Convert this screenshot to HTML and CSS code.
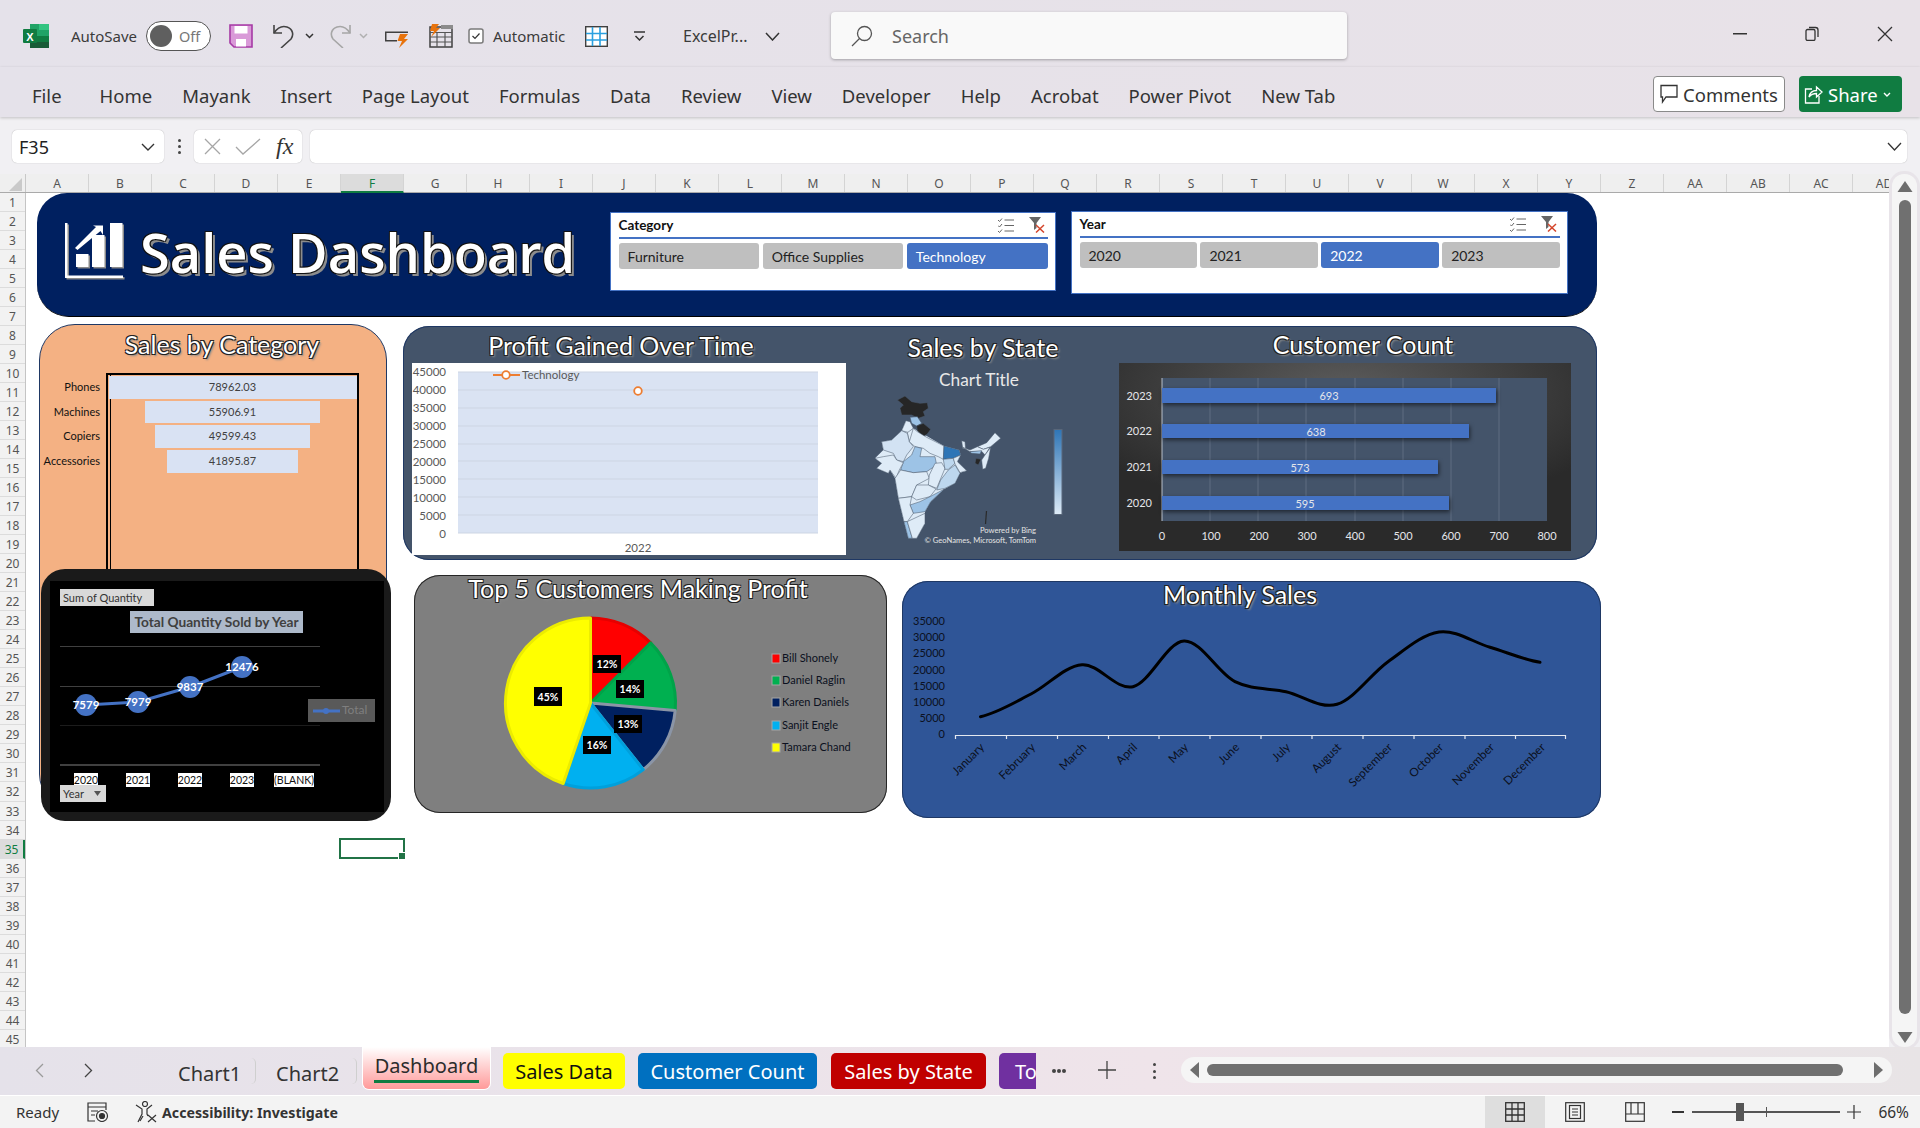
FILE: index.html
```html
<!DOCTYPE html>
<html lang="en">
<head>
  <meta charset="UTF-8" />
  <title>ExcelProject - Excel</title>
  <link rel="stylesheet" href="styles.css">
</head>
<body>
<div class="app">

  <!-- title bar -->
  <header class="titlebar">
    <svg class="ic-excel" width="26" height="24" viewBox="0 0 26 24">
      <rect x="7" y="0" width="19" height="6" fill="#21a366"/>
      <rect x="16" y="0" width="10" height="6" fill="#33c481"/>
      <rect x="7" y="6" width="9" height="6" fill="#21a366"/>
      <rect x="16" y="6" width="10" height="6" fill="#21a366"/>
      <rect x="7" y="12" width="9" height="6" fill="#107c41"/>
      <rect x="16" y="12" width="10" height="6" fill="#107c41"/>
      <rect x="7" y="18" width="19" height="6" fill="#185c37"/>
      <rect x="0" y="5" width="14" height="14" rx="1" fill="#107c41"/>
      <text x="7" y="16.5" text-anchor="middle" class="xl-x">X</text>
    </svg>
    <span class="tb-text autosave">AutoSave</span>
    <span class="toggle"><i class="knob"></i><span class="off">Off</span></span>
    <svg class="ic-save" width="24" height="24" viewBox="0 0 24 24">
      <path d="M1 1H23V23H5L1 19Z" fill="#d99ad8" stroke="#a63aa5" stroke-width="1.6"/>
      <rect x="5.5" y="2" width="13" height="7.5" fill="#fff"/>
      <rect x="7" y="15" width="10" height="7.5" fill="#fff"/>
    </svg>
    <svg class="ic-undo" width="24" height="24" viewBox="0 0 24 24" fill="none" stroke="#444" stroke-width="1.6">
      <path d="M2 1V9H10"/><path d="M2 9C6 3 10 1.500 15 3C21 5 22 11 19 15L9 24"/>
    </svg>
    <svg class="ic-chev c1" width="9" height="6" viewBox="0 0 9 6" fill="none" stroke="#333" stroke-width="1.500"><path d="M1 1L4.500 4.500L8 1"/></svg>
    <svg class="ic-redo" width="24" height="24" viewBox="0 0 24 24" fill="none" stroke="#a6a6a6" stroke-width="1.6">
      <path d="M22 1V9H14"/><path d="M22 9C18 3 14 1.500 9 3C3 5 2 11 5 15L15 24"/>
    </svg>
    <svg class="ic-chev c2" width="9" height="6" viewBox="0 0 9 6" fill="none" stroke="#b0b0b0" stroke-width="1.500"><path d="M1 1L4.500 4.500L8 1"/></svg>
    <svg class="ic-refresh" width="25" height="19" viewBox="0 0 25 19">
      <path d="M1 2.500H24V4H2.500V11H13V12.500H1Z" fill="#404040"/>
      <path d="M16 5H24L20 10H24L15 19L18 12H13.500Z" fill="#e8730c"/>
    </svg>
    <svg class="ic-calc" width="24" height="24" viewBox="0 0 24 24">
      <rect x="1" y="3" width="22" height="20" fill="none" stroke="#404040" stroke-width="1.500"/>
      <path d="M1 8.500H23M1 13H23M1 18H23M8 8V23M16 8V23" stroke="#555" stroke-width="1.200"/>
      <rect x="12" y="1" width="12" height="4" fill="#8c8c8c"/>
      <path d="M3 0H10L7 4H11L2 13L5 7H1Z" fill="#e8730c"/>
    </svg>
    <span class="auto-check"><svg width="16" height="16" viewBox="0 0 16 16" fill="none"><rect x="1" y="1" width="14" height="14" rx="2" fill="#fff" stroke="#7a7a7a" stroke-width="1.500"/><path d="M4.500 8L7 10.500L11.500 5.500" stroke="#333" stroke-width="1.200"/></svg></span>
    <span class="tb-text automatic">Automatic</span>
    <svg class="ic-grid" width="23" height="21" viewBox="0 0 23 21">
      <rect x="0.700" y="0.700" width="21.600" height="19.600" fill="#fff" stroke="#404040" stroke-width="1.400"/>
      <path d="M7.500 1V20M15 1V20M1 7.500H22M1 14H22" stroke="#2aa0e0" stroke-width="1.600"/>
    </svg>
    <svg class="ic-more" width="13" height="10" viewBox="0 0 13 10" fill="none" stroke="#333" stroke-width="1.500"><path d="M1 1H12"/><path d="M2.500 5L6.500 9L10.500 5"/></svg>
    <span class="tb-text filename">ExcelPr...</span>
    <svg class="ic-chev c3" width="15" height="9" viewBox="0 0 15 9" fill="none" stroke="#333" stroke-width="1.500"><path d="M1 1L7.500 8L14 1"/></svg>
    <div class="searchbox">
      <svg width="22" height="22" viewBox="0 0 22 22" fill="none" stroke="#555" stroke-width="1.300"><circle cx="13.500" cy="8.500" r="7"/><path d="M8.500 13.500L1 21"/></svg>
      <span>Search</span>
    </div>
    <div class="win-btns">
      <svg width="14" height="2" viewBox="0 0 14 2"><rect width="14" height="1.500" fill="#333"/></svg>
      <svg width="14" height="15" viewBox="0 0 14 15" fill="none" stroke="#333" stroke-width="1.300"><rect x="1" y="3.500" width="9" height="11" rx="1.500"/><path d="M4 1.500H10.500C12 1.500 13 2.500 13 4V11"/></svg>
      <svg width="16" height="16" viewBox="0 0 16 16" stroke="#333" stroke-width="1.300"><path d="M1 1L15 15M15 1L1 15"/></svg>
    </div>
  </header>

  <!-- ribbon tabs -->
  <nav class="ribbon">
    <a class="file-tab">File</a><a>Home</a><a>Mayank</a><a>Insert</a><a>Page Layout</a><a>Formulas</a><a>Data</a><a>Review</a><a>View</a><a>Developer</a><a>Help</a><a>Acrobat</a><a>Power Pivot</a><a>New Tab</a>
    <div class="ribbon-right">
      <button class="btn-comments">
        <svg width="18" height="20" viewBox="0 0 18 20" fill="none" stroke="#333" stroke-width="1.300"><path d="M1 1.500H17V13H6L2.500 18V13H1Z"/></svg>
        Comments
      </button>
      <button class="btn-share">
        <svg width="19" height="20" viewBox="0 0 19 20" fill="none" stroke="#fff" stroke-width="1.300"><path d="M8 5H1.500V19H15V12"/><path d="M5 13C6 8 9 6.500 12.500 6.500V3L18 8L12.500 13V9.500C9.500 9.500 7 10.500 5 13Z"/></svg>
        Share
        <svg width="8" height="5" viewBox="0 0 8 5" fill="none" stroke="#fff" stroke-width="1.400"><path d="M1 1L4 4L7 1"/></svg>
      </button>
    </div>
  </nav>

  <!-- formula bar -->
  <div class="formula-bar">
    <div class="namebox">
      <span>F35</span>
      <svg width="14" height="8" viewBox="0 0 14 8" fill="none" stroke="#333" stroke-width="1.400"><path d="M1 1L7 7L13 1"/></svg>
    </div>
    <div class="fb-dots"><i></i><i></i><i></i></div>
    <div class="fb-actions">
      <svg width="17" height="17" viewBox="0 0 17 17" stroke="#a6a6a6" stroke-width="1.300"><path d="M1 1L16 16M16 1L1 16"/></svg>
      <svg width="26" height="17" viewBox="0 0 26 17" fill="none" stroke="#a6a6a6" stroke-width="1.300"><path d="M1 9L8 16L25 1"/></svg>
      <span class="fx">fx</span>
    </div>
    <div class="fb-input">
      <svg width="15" height="9" viewBox="0 0 15 9" fill="none" stroke="#333" stroke-width="1.300"><path d="M1 1L7.500 8L14 1"/></svg>
    </div>
  </div>

  <div class="grid-area">
    <div class="sheet-col">
      <div class="col-heads">
        <span class="corner"><svg width="13" height="13" viewBox="0 0 13 13"><path d="M13 0V13H0Z" fill="#c9c9c9"/></svg></span>
        <span>A</span><span>B</span><span>C</span><span>D</span><span>E</span><span class="on">F</span><span>G</span><span>H</span><span>I</span><span>J</span><span>K</span><span>L</span><span>M</span><span>N</span><span>O</span><span>P</span><span>Q</span><span>R</span><span>S</span><span>T</span><span>U</span><span>V</span><span>W</span><span>X</span><span>Y</span><span>Z</span><span>AA</span><span>AB</span><span>AC</span><span>AD</span>
      </div>
      <div class="sheet-row">
        <div class="row-heads">
          <span>1</span><span>2</span><span>3</span><span>4</span><span>5</span><span>6</span><span>7</span><span>8</span><span>9</span><span>10</span><span>11</span><span>12</span><span>13</span><span>14</span><span>15</span><span>16</span><span>17</span><span>18</span><span>19</span><span>20</span><span>21</span><span>22</span><span>23</span><span>24</span><span>25</span><span>26</span><span>27</span><span>28</span><span>29</span><span>30</span><span>31</span><span>32</span><span>33</span><span>34</span><span class="on">35</span><span>36</span><span>37</span><span>38</span><span>39</span><span>40</span><span>41</span><span>42</span><span>43</span><span>44</span><span>45</span>
        </div>

        <!-- floating objects on the worksheet -->
        <main class="sheet">
          <div class="banner">
            <svg class="logo" width="60" height="57" viewBox="0 0 60 57">
              <g fill="#8a8a8a" transform="translate(1.500 1.500)">
                <path d="M0 0H2.500V52.500H58V55H0Z"/><rect x="11" y="31" width="12.500" height="13"/><rect x="27" y="12" width="12.500" height="32"/><rect x="45" y="0" width="12.500" height="44"/>
              </g>
              <g fill="#fff">
                <path d="M0 0H2.500V52.500H58V55H0Z"/><rect x="11" y="31" width="12.500" height="13"/><rect x="27" y="12" width="12.500" height="32"/><rect x="45" y="0" width="12.500" height="44"/>
                <path d="M10 25L31 4L28 2.500H38V12L35.500 8L12.500 27Z"/>
              </g>
            </svg>
            <h1>Sales Dashboard</h1>
          </div>

          <section class="slicer slicer-cat">
            <div class="slicer-head">
              <b>Category</b>
              <svg class="ic-multi" width="16" height="15" viewBox="0 0 16 15" fill="none" stroke="#666" stroke-width="1"><path d="M6.500 2H16M6.500 7.500H16M6.500 13H16M0 2L1.500 3.500L4 .5M0 7.500L1.500 9L4 6M0 13L1.500 14.500L4 11.500"/></svg>
              <svg class="ic-clear" width="16" height="16" viewBox="0 0 16 16"><path d="M0 0H12L7.500 6V11L5 13V6Z" fill="#666"/><path d="M7 8L15 15.500M15 8L7 15.500" stroke="#d4462c" stroke-width="1.500"/></svg>
            </div>
            <div class="slicer-btns">
              <span>Furniture</span><span>Office Supplies</span><span class="sel">Technology</span>
            </div>
          </section>

          <section class="slicer slicer-year">
            <div class="slicer-head">
              <b>Year</b>
              <svg class="ic-multi" width="16" height="15" viewBox="0 0 16 15" fill="none" stroke="#666" stroke-width="1"><path d="M6.500 2H16M6.500 7.500H16M6.500 13H16M0 2L1.500 3.500L4 .5M0 7.500L1.500 9L4 6M0 13L1.500 14.500L4 11.500"/></svg>
              <svg class="ic-clear" width="16" height="16" viewBox="0 0 16 16"><path d="M0 0H12L7.500 6V11L5 13V6Z" fill="#666"/><path d="M7 8L15 15.500M15 8L7 15.500" stroke="#d4462c" stroke-width="1.500"/></svg>
            </div>
            <div class="slicer-btns">
              <span>2020</span><span>2021</span><span class="sel">2022</span><span>2023</span>
            </div>
          </section>

          <section class="card-category">
            <h2 class="wtitle">Sales by Category</h2>
            <div class="funnel">
              <div class="funnel-labels">
                <span>Phones</span><span>Machines</span><span>Copiers</span><span>Accessories</span>
              </div>
              <div class="funnel-frame">
                <div class="funnel-bar" style="width:248px">78962.03</div>
                <div class="funnel-bar" style="width:175px">55906.91</div>
                <div class="funnel-bar" style="width:155px">49599.43</div>
                <div class="funnel-bar" style="width:131px">41895.87</div>
              </div>
            </div>
          </section>

          <section class="card-slate">
            <svg class="fill" viewBox="403 326 1194 234">
              <!-- profit chart -->
              <rect x="412" y="363" width="434" height="192" fill="#fff"/>
              <rect x="458" y="372" width="360" height="161" fill="#dae3f3"/>
              <path d="M458 372H818M458 390H818M458 408H818M458 426H818M458 444H818M458 461H818M458 479H818M458 497H818M458 515H818M458 533H818" stroke="#cdd5e3" stroke-width="1"/>
              <g class="t-axis" text-anchor="end">
                <text x="446" y="376">45000</text><text x="446" y="394">40000</text><text x="446" y="412">35000</text><text x="446" y="430">30000</text><text x="446" y="448">25000</text><text x="446" y="466">20000</text><text x="446" y="484">15000</text><text x="446" y="502">10000</text><text x="446" y="520">5000</text><text x="446" y="538">0</text>
              </g>
              <text x="638" y="552" text-anchor="middle" class="t-axis">2022</text>
              <path d="M493 375H520" stroke="#ed7d31" stroke-width="2"/>
              <circle cx="506" cy="375" r="3.800" fill="#fff" stroke="#ed7d31" stroke-width="1.800"/>
              <text x="522" y="379" class="t-axis">Technology</text>
              <circle cx="638" cy="391" r="3.800" fill="#fff" stroke="#ed7d31" stroke-width="1.800"/>

              <!-- state map -->
              <text x="979" y="386" text-anchor="middle" class="t-chart-title">Chart Title</text>
              <g transform="translate(870 390) scale(.3333)" stroke="#4a586c" stroke-width="1.600" stroke-linejoin="round">
                <path fill="#deebf7" stroke="none" d="M108 92L130 115L222 168L268 180L272 195L262 215L290 242L270 248L255 280L222 298L182 335L165 365L165 400L140 445L115 445L102 395L85 325L75 265L60 240L55 250L20 235L35 220L15 205L40 180L35 155L65 150L95 122Z"/>
                <path fill="#262626" d="M82 30L105 18L125 35L150 40L172 38L175 55L160 65L165 78L145 85L125 75L95 75L90 55L100 45Z"/>
                <path fill="#9dc3e6" d="M120 82L142 80L155 100L140 108L125 100Z"/>
                <path fill="#262626" d="M140 108L160 100L182 118L172 132L160 140L142 122Z"/>
                <path fill="#deebf7" d="M95 122L108 92L120 95L130 115L118 128Z"/>
                <path fill="#deebf7" d="M112 128L130 115L135 150L118 155Z"/>
                <path fill="#d2e2f3" d="M35 155L65 150L95 122L112 130L118 155L130 170L110 195L100 215L80 210L70 190L40 180Z"/>
                <path fill="#deebf7" d="M130 115L142 125L170 142L222 168L220 208L205 200L180 190L160 175L135 170L118 155Z"/>
                <path fill="#2e75b6" d="M222 168L268 180L272 195L250 205L220 208Z"/>
                <path fill="#9dc3e6" d="M100 215L125 195L135 170L155 175L150 200L195 200L200 225L170 245L130 248L92 240Z"/>
                <path fill="#deebf7" d="M15 205L40 200L70 195L80 210L100 218L88 240L78 265L60 240L55 250L20 235L35 220Z"/>
                <path fill="#deebf7" d="M75 265L92 240L130 248L170 245L178 265L140 285L125 320L85 325Z"/>
                <path fill="#deebf7" d="M195 220L215 218L225 235L200 295L175 285L178 255Z"/>
                <path fill="#bdd7ee" d="M220 208L250 205L255 220L235 238L225 238Z"/>
                <path fill="#deebf7" d="M250 205L272 195L262 215L290 242L270 248L255 222Z"/>
                <path fill="#bdd7ee" d="M235 240L255 225L270 250L255 280L225 295L200 300L212 270Z"/>
                <path fill="#deebf7" d="M140 285L175 285L198 297L180 320L140 330L125 320Z"/>
                <path fill="#9dc3e6" d="M120 345L150 335L180 320L222 298L182 335L165 365L130 370Z"/>
                <path fill="#deebf7" d="M85 325L125 320L120 345L130 370L112 395L102 395Z"/>
                <path fill="#9dc3e6" d="M102 395L112 395L127 445L115 445Z"/>
                <path fill="#deebf7" d="M112 395L165 370L165 400L140 445L127 445Z"/>
                <path fill="#deebf7" d="M275 152L285 155L287 178L278 175Z"/>
                <path fill="#deebf7" d="M322 170L350 158L375 128L392 145L362 170L340 178Z"/>
                <path fill="#deebf7" d="M278 172L300 180L322 170L340 178L360 172L345 195L335 184L300 185Z"/>
                <path fill="#9dc3e6" d="M300 185L335 182L330 192L305 190Z"/>
                <path fill="#deebf7" d="M345 195L362 172L356 205L347 235L338 238L335 210Z"/>
                <path fill="#262626" d="M318 205L333 208L325 225L315 220Z"/>
              </g>
              <path d="M986.500 511L985.500 524" stroke="#2a2a2a" stroke-width="1.200"/>
              <text x="1036" y="533" text-anchor="end" class="t-bing">Powered by Bing</text>
              <text x="1036" y="543" text-anchor="end" class="t-bing">© GeoNames, Microsoft, TomTom</text>
              <defs>
                <linearGradient id="mapScale" x1="0" y1="0" x2="0" y2="1"><stop offset="0" stop-color="#2e75b6"/><stop offset="1" stop-color="#deebf7"/></linearGradient>
                <radialGradient id="custBg" cx=".5" cy=".15" r=".65"><stop offset="0" stop-color="#5c5c5c"/><stop offset="1" stop-color="#2a2a2a"/></radialGradient>
              </defs>
              <rect x="1054" y="429.500" width="8" height="85" fill="url(#mapScale)" stroke="#59677a"/>

              <!-- customer count -->
              <rect x="1119" y="363" width="452" height="188" fill="url(#custBg)"/>
              <rect x="1162" y="378" width="385" height="143" fill="#44546a"/>
              <path d="M1210 378V521M1258 378V521M1306 378V521M1355 378V521M1403 378V521M1451 378V521M1499 378V521" stroke="#5f6d81"/>
              <path d="M1162 378V521" stroke="#b8bfc9"/>
              <g fill="#4472c4" class="bars">
                <rect x="1162" y="388" width="334" height="15"/>
                <rect x="1162" y="424" width="307" height="14"/>
                <rect x="1162" y="460" width="276" height="14"/>
                <rect x="1162" y="496" width="287" height="14"/>
              </g>
              <g class="t-light" text-anchor="middle">
                <text x="1329" y="400">693</text><text x="1316" y="436">638</text><text x="1300" y="472">573</text><text x="1305" y="508">595</text>
              </g>
              <g class="t-light" text-anchor="end">
                <text x="1152" y="400">2023</text><text x="1152" y="435">2022</text><text x="1152" y="471">2021</text><text x="1152" y="507">2020</text>
              </g>
              <g class="t-light" text-anchor="middle">
                <text x="1162" y="540">0</text><text x="1211" y="540">100</text><text x="1259" y="540">200</text><text x="1307" y="540">300</text><text x="1355" y="540">400</text><text x="1403" y="540">500</text><text x="1451" y="540">600</text><text x="1499" y="540">700</text><text x="1547" y="540">800</text>
              </g>
            </svg>
            <h2 class="wtitle t-profit">Profit Gained Over Time</h2>
            <h2 class="wtitle t-state">Sales by State</h2>
            <h2 class="wtitle t-cust">Customer Count</h2>
          </section>

          <section class="card-black">
            <svg class="fill" viewBox="41 569 350 252">
              <rect x="50" y="581" width="334" height="231" fill="#000"/>
              <rect x="60" y="589" width="94" height="17" fill="#d9d9d9"/>
              <text x="63" y="602" class="t-btn">Sum of Quantity</text>
              <rect x="130" y="611" width="173" height="22" fill="#adb9ca"/>
              <text x="216.500" y="627" text-anchor="middle" class="t-black-title">Total Quantity Sold by Year</text>
              <path d="M60 646.500H320M60 686.500H320" stroke="#404040"/>
              <path d="M60 725.500H320" stroke="#1c1c1c"/>
              <path d="M60 765H320" stroke="#404040" stroke-width="2"/>
              <path d="M86 705L138 702L190 687L242 667" fill="none" stroke="#4472c4" stroke-width="3"/>
              <g fill="#4472c4">
                <circle cx="86" cy="705" r="11"/><circle cx="138" cy="702" r="11"/><circle cx="190" cy="687" r="11"/><circle cx="242" cy="667" r="11"/>
              </g>
              <g class="t-point" text-anchor="middle">
                <text x="86" y="709">7579</text><text x="138" y="706">7979</text><text x="190" y="691">9837</text><text x="242" y="671">12476</text>
              </g>
              <rect x="308" y="699" width="67" height="23" fill="#595959"/>
              <path d="M313 711H340" stroke="#4472c4" stroke-width="3"/>
              <circle cx="326" cy="711" r="3" fill="#4472c4"/>
              <text x="342" y="714" class="t-legend-total">Total</text>
              <g fill="#fff">
                <rect x="74" y="773" width="24" height="14"/><rect x="126" y="773" width="24" height="14"/><rect x="178" y="773" width="24" height="14"/><rect x="230" y="773" width="24" height="14"/><rect x="274" y="773" width="40" height="14"/>
              </g>
              <g class="t-cat" text-anchor="middle">
                <text x="86" y="784">2020</text><text x="138" y="784">2021</text><text x="190" y="784">2022</text><text x="242" y="784">2023</text><text x="294" y="784">(BLANK)</text>
              </g>
              <rect x="60" y="785" width="46" height="17" fill="#d9d9d9"/>
              <text x="63" y="798" class="t-btn">Year</text>
              <path d="M94 791H101L97.500 796Z" fill="#555"/>
            </svg>
          </section>

          <section class="card-gray">
            <svg class="fill" viewBox="414 575 473 238">
              <g transform="translate(-2 0)">
                <g stroke-width="3" stroke-linejoin="round">
                  <path d="M592.500 703L592.500 618A85 85 0 0 1 652.600 642.900Z" fill="#ff0000" stroke="#e60000"/>
                  <path d="M592.500 703L652.600 642.900A85 85 0 0 1 677.200 710.400Z" fill="#00b050" stroke="#00a349"/>
                  <path d="M592.500 703L677.200 710.400A85 85 0 0 1 645.300 769.600Z" fill="#002060" stroke="#8b95a6"/>
                  <path d="M592.500 703L645.300 769.600A85 85 0 0 1 565.200 783.500Z" fill="#00b0f0" stroke="#00a0dc"/>
                  <path d="M592.500 703L565.200 783.500A85 85 0 0 1 592.500 618Z" fill="#ffff00" stroke="#ecec00"/>
                </g>
                <g fill="#000">
                  <rect x="595" y="655" width="28" height="18"/><rect x="618" y="680" width="28" height="18"/><rect x="616" y="715" width="28" height="18"/><rect x="585" y="736" width="28" height="18"/><rect x="536" y="687" width="28" height="19"/>
                </g>
                <g class="t-pct" text-anchor="middle">
                  <text x="609" y="668">12%</text><text x="632" y="693">14%</text><text x="630" y="728">13%</text><text x="599" y="749">16%</text><text x="550" y="701">45%</text>
                </g>
              </g>
              <rect x="772" y="654" width="8" height="9" fill="#ff0000" stroke="#a6a6a6"/>
              <rect x="772" y="676" width="8" height="9" fill="#00b050" stroke="#a6a6a6"/>
              <rect x="772" y="698" width="8" height="9" fill="#002060" stroke="#a6a6a6"/>
              <rect x="772" y="721" width="8" height="9" fill="#00b0f0" stroke="#a6a6a6"/>
              <rect x="772" y="743" width="8" height="9" fill="#ffff00" stroke="#a6a6a6"/>
              <g class="t-dark">
                <text x="782" y="662">Bill Shonely</text><text x="782" y="684">Daniel Raglin</text><text x="782" y="706">Karen Daniels</text><text x="782" y="729">Sanjit Engle</text><text x="782" y="751">Tamara Chand</text>
              </g>
            </svg>
            <h2 class="wtitle t-top5">Top 5 Customers Making Profit</h2>
          </section>

          <section class="card-blue">
            <svg class="fill" viewBox="902 581 699 237">
              <g class="t-dark" text-anchor="end">
                <text x="945" y="625">35000</text><text x="945" y="641">30000</text><text x="945" y="657">25000</text><text x="945" y="674">20000</text><text x="945" y="690">15000</text><text x="945" y="706">10000</text><text x="945" y="722">5000</text><text x="945" y="738">0</text>
              </g>
              <path d="M955 735.500H1566M955.500 735V739M1006.500 735V739M1057.500 735V739M1108.500 735V739M1159 735V739M1210 735V739M1261 735V739M1312 735V739M1363 735V739M1414 735V739M1465 735V739M1515.500 735V739M1565.500 735V739" stroke="#e4e8f0" stroke-width="1.200" fill="none"/>
              <path d="M980.500 716.700C997.500 712.900 1014 702.700 1031 694C1048 685.300 1065 665.900 1082 664.700C1099 663.500 1116 690.650 1133 686.700C1150 682.750 1167 641.830 1184 641C1201 640.170 1218 673.250 1235 681.700C1252 690.150 1269 687.930 1286 691.700C1303 695.470 1320 709.300 1337 704.300C1354 699.300 1371 673.750 1388 661.700C1405 649.650 1422 634.400 1439 632C1456 629.600 1473 642.250 1490 647.300C1507 652.350 1524 659.800 1540 662.300" fill="none" stroke="#000" stroke-width="3" stroke-linecap="round"/>
              <g class="t-month" text-anchor="end">
                <text transform="translate(985 748) rotate(-45)">January</text>
                <text transform="translate(1036 748) rotate(-45)">February</text>
                <text transform="translate(1087 748) rotate(-45)">March</text>
                <text transform="translate(1138 748) rotate(-45)">April</text>
                <text transform="translate(1189 748) rotate(-45)">May</text>
                <text transform="translate(1240 748) rotate(-45)">June</text>
                <text transform="translate(1291 748) rotate(-45)">July</text>
                <text transform="translate(1342 748) rotate(-45)">August</text>
                <text transform="translate(1393 748) rotate(-45)">September</text>
                <text transform="translate(1444 748) rotate(-45)">October</text>
                <text transform="translate(1495 748) rotate(-45)">November</text>
                <text transform="translate(1546 748) rotate(-45)">December</text>
              </g>
            </svg>
            <h2 class="wtitle t-monthly">Monthly Sales</h2>
          </section>

          <div class="cell-cursor"></div>
        </main>
      </div>
    </div>

    <aside class="vscroll">
      <svg width="16" height="11" viewBox="0 0 16 11"><path d="M8 0L15.500 11H.5Z" fill="#6e6e6e"/></svg>
      <div class="vthumb"></div>
      <svg width="16" height="11" viewBox="0 0 16 11"><path d="M8 11L15.500 0H.5Z" fill="#6e6e6e"/></svg>
    </aside>
  </div>

  <!-- sheet tabs -->
  <div class="tabbar">
    <svg class="tab-prev" width="9" height="15" viewBox="0 0 9 15" fill="none" stroke="#9a9a9a" stroke-width="1.300"><path d="M8 1L1.500 7.500L8 14"/></svg>
    <svg class="tab-next" width="9" height="15" viewBox="0 0 9 15" fill="none" stroke="#444" stroke-width="1.300"><path d="M1 1L7.500 7.500L1 14"/></svg>
    <span class="tab plain t1">Chart1</span>
    <span class="tab plain t2">Chart2</span>
    <span class="tab active"><span>Dashboard</span></span>
    <span class="tab t-yellow">Sales Data</span>
    <span class="tab t-blue">Customer Count</span>
    <span class="tab t-red">Sales by State</span>
    <span class="tab t-purple">To</span>
    <span class="tab-more"><i></i><i></i><i></i></span>
    <svg class="tab-add" width="18" height="18" viewBox="0 0 18 18" stroke="#444" stroke-width="1.300"><path d="M9 0V18M0 9H18"/></svg>
    <span class="tab-vdots"><i></i><i></i><i></i></span>
    <div class="hscroll">
      <svg width="9" height="16" viewBox="0 0 9 16"><path d="M0 8L9 0V16Z" fill="#6e6e6e"/></svg>
      <div class="hthumb"></div>
      <svg width="9" height="16" viewBox="0 0 9 16"><path d="M9 8L0 0V16Z" fill="#6e6e6e"/></svg>
    </div>
  </div>

  <!-- status bar -->
  <footer class="statusbar">
    <span class="st-ready">Ready</span>
    <svg class="st-macro" width="22" height="20" viewBox="0 0 22 20" fill="none" stroke="#333" stroke-width="1.200"><path d="M8 19H1V1H19V8M1 5H19M4 9H11M4 13H8"/><circle cx="15" cy="14" r="5.500"/><circle cx="15" cy="14" r="2.500" fill="#333"/></svg>
    <svg class="st-access" width="22" height="22" viewBox="0 0 22 22" fill="none" stroke="#333" stroke-width="1.200"><circle cx="10" cy="3" r="2.500"/><path d="M1 4L7 8V13L3 21M17 4L12 8V13L13 15M8 15L5 20"/><path d="M13 14L21 21M21 14L13 21"/></svg>
    <b class="st-accessibility">Accessibility: Investigate</b>
    <div class="view-btn on">
      <svg width="20" height="20" viewBox="0 0 20 20" fill="none" stroke="#333" stroke-width="1.300"><rect x=".7" y=".7" width="18.600" height="18.600"/><path d="M7 1V19M13 1V19M1 7H19M1 13H19"/></svg>
    </div>
    <div class="view-btn">
      <svg width="20" height="20" viewBox="0 0 20 20" fill="none" stroke="#333" stroke-width="1.200"><rect x=".7" y=".7" width="18.600" height="18.600"/><rect x="4.500" y="3.500" width="11" height="13"/><path d="M7 7H13M7 10H13M7 13H13"/></svg>
    </div>
    <div class="view-btn">
      <svg width="20" height="20" viewBox="0 0 20 20" fill="none" stroke="#333" stroke-width="1.200"><rect x=".7" y=".7" width="18.600" height="18.600"/><path d="M1 12H19M6 1V12M13 1V12"/></svg>
    </div>
    <div class="zoomer">
      <i class="z-minus"></i>
      <div class="z-track"><i class="z-mid"></i><i class="z-thumb"></i></div>
      <svg width="14" height="14" viewBox="0 0 14 14" stroke="#333" stroke-width="1.200"><path d="M7 0V14M0 7H14"/></svg>
      <span>66%</span>
    </div>
  </footer>
</div>
</body>
</html>
```

FILE: styles.css
```css
* { box-sizing: border-box; }

html, body {
  margin: 0;
  padding: 0;
  height: 100%;
  overflow: hidden;
}

body {
  font-family: "Noto Sans", Arial, sans-serif;
  color: #333;
}

.app {
  width: 1920px;
  height: 1128px;
  display: flex;
  flex-direction: column;
  background: #f1f0f3;
}

svg { display: block; flex: none; }

/* title bar */
.titlebar {
  height: 67px;
  display: flex;
  align-items: center;
  background: linear-gradient(90deg, #e5e2ea, #e8e2e8);
  padding-left: 23px;
  padding-top: 5px;
}

.xl-x {
  font: bold 11px "Liberation Sans", sans-serif;
  fill: #fff;
}

.tb-text {
  font-size: 15px;
  color: #3b3b3b;
  white-space: nowrap;
}

.autosave { margin-left: 22px; width: 75px; }

.toggle {
  width: 65px;
  height: 30px;
  margin-left: 0;
  border: 1.500px solid #555;
  border-radius: 15px;
  background: #fff;
  display: flex;
  align-items: center;
  padding-left: 3px;
}
.knob {
  width: 22px;
  height: 22px;
  border-radius: 50%;
  background: #5f5f5f;
}
.off {
  margin-left: 7px;
  font-size: 14.5px;
  color: #777;
}

.ic-save { margin-left: 18px; }
.ic-undo { margin-left: 19px; }
.c1 { margin-left: 9px; }
.ic-redo { margin-left: 14px; }
.c2 { margin-left: 7px; }
.ic-refresh { margin-left: 16px; margin-top: 4px; }
.ic-calc { margin-left: 20px; }
.auto-check { margin-left: 15px; }
.automatic { margin-left: 9px; width: 78px; }
.ic-grid { margin-left: 14px; }
.ic-more { margin-left: 25px; }
.filename { margin-left: 37px; width: 70px; font-size: 16px; }
.c3 { margin-left: 12px; }

.searchbox {
  width: 516px;
  height: 47px;
  margin-left: 51px;
  margin-top: -1px;
  background: #f9f9f9;
  border-radius: 4px;
  box-shadow: 0 1px 3px rgba(0, 0, 0, 0.3);
  display: flex;
  align-items: center;
  padding-left: 20px;
  gap: 19px;
  font-size: 18px;
  color: #666;
}

.win-btns {
  margin-left: auto;
  display: flex;
  align-items: center;
  gap: 58px;
  padding-right: 27px;
  margin-top: -5px;
}

/* ribbon tabs */
.ribbon {
  height: 50px;
  display: flex;
  align-items: center;
  gap: 30px;
  padding: 7px 18px 0 32px;
  background: linear-gradient(90deg, #e5e2ea, #e8e2e8);
  box-shadow: 0 1px 3px rgba(0, 0, 0, 0.2);
  font-size: 18.500px;
  color: #333;
  position: relative;
}
.ribbon a { white-space: nowrap; }
.file-tab { margin-right: 8px; }

.ribbon-right {
  margin-left: auto;
  display: flex;
  gap: 14px;
  margin-top: -3px;
}
.btn-comments, .btn-share {
  height: 36px;
  border-radius: 4px;
  font: 18.500px "Noto Sans", Arial, sans-serif;
  display: flex;
  align-items: center;
  padding: 0;
}
.btn-comments {
  width: 132px;
  background: #fff;
  border: 1px solid #8a8a8a;
  color: #333;
  gap: 5px;
  padding-left: 6px;
}
.btn-share {
  width: 103px;
  background: #107c41;
  border: 0;
  color: #fff;
  gap: 5px;
  padding-left: 5px;
}

/* formula bar */
.formula-bar {
  height: 57px;
  display: flex;
  padding: 13px 13px 11px 12px;
  background: #f1f0f3;
}
.namebox, .fb-actions, .fb-input {
  background: #fff;
  border-radius: 5px;
  box-shadow: 0 0 1px rgba(0, 0, 0, 0.35);
  display: flex;
  align-items: center;
}
.namebox {
  width: 152px;
  justify-content: space-between;
  padding: 0 9px 0 7px;
  font-size: 18px;
  color: #222;
}
.fb-dots {
  width: 30px;
  display: flex;
  flex-direction: column;
  align-items: center;
  justify-content: center;
  gap: 3px;
}
.fb-dots i, .tab-vdots i {
  width: 3px;
  height: 3px;
  background: #444;
  border-radius: 50%;
}
.fb-actions {
  width: 108px;
  padding-left: 10px;
  gap: 14px;
}
.fx {
  font: italic 24px "Liberation Serif", serif;
  color: #333;
  margin-left: 1px;
}
.fb-input {
  flex: 1;
  margin-left: 8px;
  justify-content: flex-end;
  padding-right: 5px;
}

/* grid */
.grid-area {
  flex: 1;
  display: flex;
  min-height: 0;
}
.sheet-col {
  width: 1889px;
  display: flex;
  flex-direction: column;
  overflow: hidden;
}
.col-heads {
  height: 19px;
  flex: none;
  display: flex;
  background: #efefef;
  border-bottom: 1px solid #aaa;
}
.col-heads span {
  width: 63px;
  flex: none;
  border-right: 1px solid #d4d4d4;
  font-size: 12px;
  line-height: 20px;
  text-align: center;
  color: #555;
}
.col-heads .corner {
  width: 26px;
  padding: 4px 0 0 9px;
  border-right: 1px solid #c8c8c8;
}
.col-heads .on {
  background: #dcdcdc;
  color: #107c41;
  border-bottom: 2px solid #107c41;
  height: 19px;
}

.sheet-row {
  flex: 1;
  display: flex;
  min-height: 0;
}
.row-heads {
  width: 26px;
  flex: none;
  background: #f2f2f2;
  border-right: 1px solid #c4c4c4;
}
.row-heads span {
  display: block;
  height: 19.030px;
  border-bottom: 1px solid #dcdcdc;
  font-size: 12px;
  line-height: 20px;
  text-align: center;
  color: #555;
}
.row-heads .on {
  background: #dcdcdc;
  color: #107c41;
  border-right: 2px solid #107c41;
}

.sheet {
  flex: 1;
  position: relative;
  background: #fff;
  overflow: hidden;
  font-family: Lato, "Noto Sans", sans-serif;
}

.sheet section, .banner, .cell-cursor { position: absolute; }
.fill { width: 100%; height: 100%; }

/* chart titles */
.wtitle {
  margin: 0;
  font-family: Lato, sans-serif;
  font-weight: 400;
  font-size: 25px;
  line-height: 32px;
  color: #fff;
  white-space: nowrap;
  text-align: center;
  text-shadow: -1px -1px 0 #222, 1px -1px 0 #222, -1px 1px 0 #222, 1px 1px 0 #222, 2px 2px 2px #8a8a8a;
}

/* banner */
.banner {
  left: 11px;
  top: 0;
  width: 1560px;
  height: 124px;
  background: #002060;
  border-radius: 0 0 32px 32px / 0 0 32px 32px;
  border-top-left-radius: 30px;
  border-top-right-radius: 30px;
  border-bottom: 1px solid #000;
  display: flex;
  align-items: flex-start;
  padding: 30px 0 0 28px;
}
.banner h1 {
  margin: -6px 0 0 15px;
  font-family: "Open Sans", sans-serif;
  font-weight: 600;
  font-size: 54.200px;
  line-height: 70px;
  color: #fff;
  white-space: nowrap;
  text-shadow: -1px -1px 0 #111, 1px -1px 0 #111, -1px 1px 0 #111, 1px 1px 0 #222, 3px 3px 0 #8c8c8c;
}

/* slicers */
.slicer {
  background: #fff;
  border: 1.500px solid #4472c4;
  padding: 0 7.500px;
}
.slicer-cat { left: 584px; top: 19px; width: 446px; height: 79px; }
.slicer-year { left: 1045px; top: 18px; width: 497px; height: 83px; }
.slicer-head {
  height: 25.500px;
  display: flex;
  align-items: center;
  border-bottom: 2px solid #4472c4;
  font-size: 13.500px;
  color: #111;
  padding-top: 1px;
  padding-right: 3px;
}
.slicer-head b { flex: 1; }
.ic-clear { margin-left: 15px; }
.slicer-btns {
  display: flex;
  gap: 3.500px;
  margin-top: 4px;
}
.slicer-btns span {
  flex: 1;
  height: 26px;
  background: #bfbfbf;
  border-radius: 3px;
  font-size: 14px;
  line-height: 27px;
  padding-left: 9px;
  color: #222;
}
.slicer-btns .sel { background: #4472c4; color: #fff; }

/* sales by category */
.card-category {
  left: 13px;
  top: 131px;
  width: 348px;
  height: 486px;
  background: #f4b183;
  border: 1px solid #1f3864;
  border-radius: 36px;
  padding-top: 3px;
}
.card-category .wtitle { padding-left: 18px; }
.funnel {
  display: flex;
  margin-top: 13px;
}
.funnel-labels {
  width: 66px;
  padding: 3px 6px 0 0;
  display: flex;
  flex-direction: column;
  gap: 2.200px;
  text-align: right;
  font-size: 11px;
  line-height: 22.500px;
  color: #111;
}
.funnel-frame {
  width: 253px;
  height: 240px;
  border: 2px solid #000;
  padding-top: 1px;
  display: flex;
  flex-direction: column;
  align-items: center;
  gap: 2.200px;
  box-shadow: inset 2px 0 0 #f4b183, inset 3px 0 0 #000;
}
.funnel-bar {
  height: 22.500px;
  background: #d9e2f3;
  font-size: 11px;
  line-height: 22.500px;
  text-align: center;
  color: #404040;
}

/* slate card with three charts */
.card-slate {
  left: 377px;
  top: 133px;
  width: 1194px;
  height: 234px;
  background: #44546a;
  box-shadow: inset 0 0 0 1px #1f3864;
  border-radius: 26px;
}
.card-slate .wtitle, .card-gray .wtitle, .card-blue .wtitle { position: absolute; }
.t-profit { left: 0; width: 436px; top: 3px; }
.t-state { left: 460px; width: 240px; top: 5px; }
.t-cust { left: 720px; width: 480px; top: 2px; }
.t-top5 { left: 0; width: 448px; top: -3px; }
.t-monthly { left: 0; width: 676px; top: -3px; }

.bars { filter: drop-shadow(1px 2px 2px rgba(0, 0, 0, 0.55)); }

/* black chart */
.card-black {
  left: 15px;
  top: 376px;
  width: 350px;
  height: 252px;
  background: #1a1a1a;
  border-radius: 24px;
  overflow: hidden;
}

/* pie */
.card-gray {
  left: 388px;
  top: 382px;
  width: 473px;
  height: 238px;
  background: #7f7f7f;
  box-shadow: inset 0 0 0 1px #262626;
  border-radius: 26px;
}

/* monthly */
.card-blue {
  left: 876px;
  top: 388px;
  width: 699px;
  height: 237px;
  background: #2f5597;
  box-shadow: inset 0 0 0 1px #1f3864;
  border-radius: 26px;
}

.cell-cursor {
  left: 313px;
  top: 645px;
  width: 66px;
  height: 21px;
  border: 2px solid #217346;
}
.cell-cursor::after {
  content: "";
  position: absolute;
  right: -3px;
  bottom: -3px;
  width: 6px;
  height: 6px;
  background: #217346;
  border: 1px solid #fff;
}

/* chart text */
.t-axis { font-size: 11.500px; fill: #595959; }
.t-chart-title { font-size: 17.300px; fill: #e8e8e8; }
.t-bing { font-size: 7.600px; fill: #e4e4e4; }
.t-light { font-size: 11px; fill: #e4e6ea; }
.t-btn { font-size: 11px; fill: #333; }
.t-black-title { font-size: 13.700px; font-weight: 700; fill: #404040; }
.t-point { font-size: 11.500px; font-weight: 700; fill: #fff; }
.t-legend-total { font-size: 12px; fill: #7f7f7f; }
.t-cat { font-size: 10.500px; fill: #111; }
.t-pct { font-size: 10.500px; font-weight: 700; fill: #fff; }
.t-dark { font-size: 11px; fill: #0b1020; }
.t-month { font-size: 11.700px; fill: #0b1020; }

/* sheet tabs */
.tabbar {
  height: 48px;
  display: flex;
  align-items: flex-start;
  background: linear-gradient(90deg, #e5e2ea, #efe4ea 60%, #e8e4e6);
  font-size: 20px;
  position: relative;
}
.tab-prev { margin: 16px 0 0 35px; }
.tab-next { margin: 16px 0 0 40px; }
.tab {
  height: 36px;
  margin-top: 6px;
  border-radius: 5px;
  line-height: 37px;
  white-space: nowrap;
  flex: none;
}
.plain { color: #333; }
.t1 { margin-left: 85px; width: 78px; border-right: 1px solid #cfcfcf; height: 26px; margin-top: 11px; line-height: 32px; }
.t2 { margin-left: 20px; width: 81px; border-right: 1px solid #cfcfcf; height: 26px; margin-top: 11px; line-height: 32px; }
.active {
  margin: 0 0 0 6px;
  height: 42px;
  width: 127px;
  background: linear-gradient(#fff, #ff9a9a);
  border-radius: 0 0 6px 6px;
  padding: 5px 11px 0;
  box-shadow: 0 0 0 1px #fff;
}
.active span {
  display: block;
  height: 31px;
  line-height: 27px;
  border-bottom: 3px solid #107c41;
  text-align: center;
  color: #2c2c2c;
}
.t-yellow { margin-left: 13px; width: 122px; background: #ffff00; color: #111; text-align: center; }
.t-blue { margin-left: 13px; width: 179px; background: #0070c0; color: #fff; text-align: center; }
.t-red { margin-left: 14px; width: 155px; background: #c00000; color: #fff; text-align: center; }
.t-purple { margin-left: 13px; width: 37px; background: #7030a0; color: #fff; padding-left: 16px; overflow: hidden; border-radius: 5px 0 0 5px; }

.tab-more {
  margin: 22px 0 0 16px;
  display: flex;
  gap: 1px;
}
.tab-more i {
  width: 4px;
  height: 4px;
  background: #444;
  border-radius: 50%;
}
.tab-add { margin: 14px 0 0 32px; }
.tab-vdots {
  margin: 16px 0 0 37px;
  display: flex;
  flex-direction: column;
  gap: 3.500px;
}
.hscroll {
  position: absolute;
  left: 1181px;
  top: 10px;
  width: 711px;
  height: 26px;
  background: #f5f5f5;
  border-radius: 13px;
  display: flex;
  align-items: center;
  padding: 0 9px;
  justify-content: space-between;
}
.hthumb {
  width: 636px;
  height: 12px;
  background: #707070;
  border-radius: 6px;
  margin-left: -1px;
  margin-right: 23px;
}

/* vertical scrollbar */
.vscroll {
  flex: 1;
  margin: 0 3px 0 3px;
  background: #f5f5f5;
  border-radius: 12px;
  display: flex;
  flex-direction: column;
  align-items: center;
  padding: 7px 0 4px;
  box-shadow: 0 0 0 3px #e8e4e9;
}
.vthumb {
  width: 12px;
  flex: 1;
  margin: 8px 0 18px;
  background: #707070;
  border-radius: 6px;
}

/* status bar */
.statusbar {
  height: 33px;
  display: flex;
  align-items: center;
  background: #f3f3f3;
  border-top: 1px solid #fff;
  font-size: 14.200px;
  color: #333;
}
.st-ready { margin-left: 16px; width: 43px; font-size: 15px; }
.st-macro { margin-left: 28px; }
.st-access { margin-left: 26px; }
.st-accessibility { margin-left: 5px; }
.view-btn {
  width: 60px;
  height: 32px;
  display: flex;
  align-items: center;
  justify-content: center;
}
.view-btn.on {
  background: #dedede;
  margin-left: auto;
}
.zoomer {
  display: flex;
  align-items: center;
  margin-left: 7px;
  margin-right: 11px;
  font-size: 15.500px;
}
.z-minus { width: 12px; height: 1.500px; background: #333; margin-right: 8px; }
.z-track {
  width: 148px;
  height: 2px;
  background: #555;
  position: relative;
  margin-right: 7px;
}
.z-mid {
  position: absolute;
  left: 74px;
  top: -4px;
  width: 1px;
  height: 10px;
  background: #555;
}
.z-thumb {
  position: absolute;
  left: 44px;
  top: -8px;
  width: 8px;
  height: 18px;
  background: #555;
}
.zoomer span { margin-left: 17px; }
```
